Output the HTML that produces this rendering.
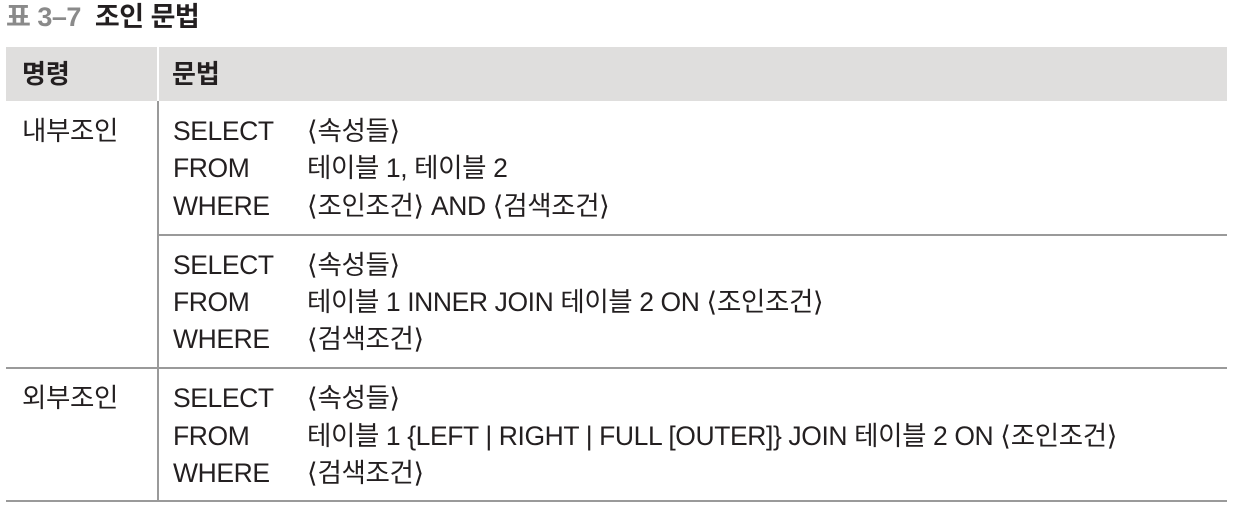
<!DOCTYPE html><html><head><meta charset="utf-8"><style>
body{margin:0;width:1239px;height:512px;background:#fff;position:relative;overflow:hidden;font-family:"Liberation Sans","Noto Sans CJK KR",sans-serif;color:#231f20}
.a{position:absolute;white-space:nowrap}
.t{font-size:26.5px;letter-spacing:-0.4px;line-height:26px}
.t .k{letter-spacing:0}
.h{font-weight:bold;font-size:26px;line-height:26px}
.b{font-family:"DejaVu Sans",sans-serif;font-weight:300;letter-spacing:0;font-size:27px}
.ln{position:absolute;background:#9a9a9a;height:1.5px}
</style></head><body>
<div class="a" style="left:6px;top:3px;font-size:27px;font-weight:bold;line-height:28px;letter-spacing:-0.5px"><span style="color:#8a8a8a">표 3–7</span>&nbsp; 조인 문법</div>
<div class="a" style="left:6px;top:47px;width:1221px;height:54px;background:#dfdedd"></div>
<div class="a" style="left:157px;top:47px;width:2px;height:54px;background:#fff"></div>
<div class="a h" style="left:22px;top:61px">명령</div>
<div class="a h" style="left:172px;top:61px">문법</div>
<div class="a" style="left:157px;top:101px;width:1.5px;height:400px;background:#9a9a9a"></div>
<div class="ln" style="left:158px;top:234px;width:1069px"></div>
<div class="ln" style="left:6px;top:367px;width:1221px"></div>
<div class="ln" style="left:6px;top:500px;width:1221px"></div>
<div class="a t" style="left:22px;top:118px">내부조인</div>
<div class="a t" style="left:22px;top:385px">외부조인</div>
<div class="a t" style="left:173px;top:118px">SELECT</div>
<div class="a t" style="left:173px;top:155px">FROM</div>
<div class="a t" style="left:173px;top:193px">WHERE</div>
<div class="a t" style="left:307px;top:118px"><span class="b">⟨</span>속성들<span class="b">⟩</span></div>
<div class="a t" style="left:307px;top:155px">테이블 1, 테이블 2</div>
<div class="a t" style="left:307px;top:193px"><span class="b">⟨</span>조인조건<span class="b">⟩</span> AND <span class="b">⟨</span>검색조건<span class="b">⟩</span></div>
<div class="a t" style="left:173px;top:252px">SELECT</div>
<div class="a t" style="left:173px;top:289px">FROM</div>
<div class="a t" style="left:173px;top:326px">WHERE</div>
<div class="a t" style="left:307px;top:252px"><span class="b">⟨</span>속성들<span class="b">⟩</span></div>
<div class="a t" style="left:307px;top:289px">테이블 1 INNER JOIN 테이블 2 ON <span class="b">⟨</span>조인조건<span class="b">⟩</span></div>
<div class="a t" style="left:307px;top:326px"><span class="b">⟨</span>검색조건<span class="b">⟩</span></div>
<div class="a t" style="left:173px;top:385px">SELECT</div>
<div class="a t" style="left:173px;top:423px">FROM</div>
<div class="a t" style="left:173px;top:460px">WHERE</div>
<div class="a t" style="left:307px;top:385px"><span class="b">⟨</span>속성들<span class="b">⟩</span></div>
<div class="a t" style="left:307px;top:423px">테이블 1 {LEFT | RIGHT | FULL [OUTER]} JOIN 테이블 2 ON <span class="b">⟨</span>조인조건<span class="b">⟩</span></div>
<div class="a t" style="left:307px;top:460px"><span class="b">⟨</span>검색조건<span class="b">⟩</span></div>
</body></html>
